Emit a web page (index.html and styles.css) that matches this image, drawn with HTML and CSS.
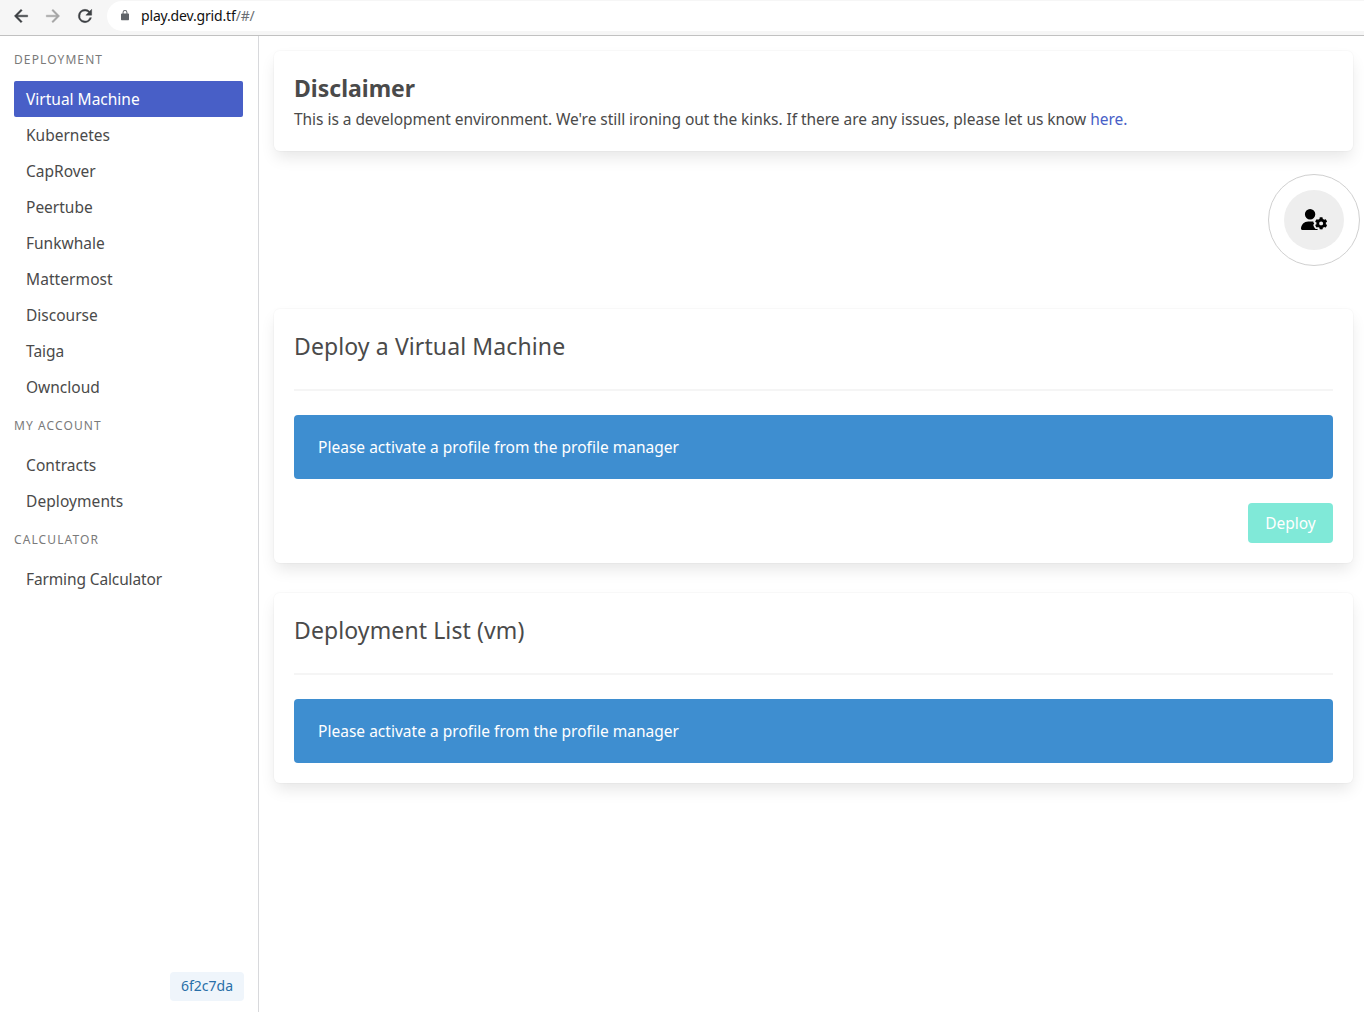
FILE: index.html
```html
<!DOCTYPE html>
<html lang="en">
<head>
<meta charset="utf-8">
<title>Playground</title>
<link rel="stylesheet" href="styles.css">
</head>
<body>
<header class="toolbar">
  <svg class="nav-icon" viewBox="0 0 24 24"><path d="M20 11H7.83l5.59-5.59L12 4l-8 8 8 8 1.41-1.41L7.83 13H20v-2z"/></svg>
  <svg class="nav-icon nav-icon-off" viewBox="0 0 24 24"><path d="M12 4l-1.41 1.41L16.17 11H4v2h12.17l-5.58 5.59L12 20l8-8z"/></svg>
  <svg class="nav-icon" viewBox="0 0 24 24"><path d="M17.65 6.35A7.96 7.96 0 0 0 12 4a8 8 0 1 0 7.73 10h-2.08A6 6 0 1 1 12 6c1.66 0 3.14.69 4.22 1.78L13 11h7V4l-2.35 2.35z"/></svg>
  <div class="address">
    <svg class="lock" viewBox="0 0 10 13"><path d="M1.2 4.500H2V3.200a3 3 0 0 1 6 0v1.300h.8c.7 0 1.200.5 1.200 1.200v6.100c0 .7-.5 1.200-1.200 1.200H1.200C.5 13 0 12.500 0 11.800V5.700c0-.7.5-1.200 1.200-1.200zM3.200 4.500h3.600V3.200a1.800 1.800 0 0 0-3.600 0z"/></svg>
    <span class="url">play.dev.grid.tf<span class="url-path">/#/</span></span>
  </div>
</header>
<div class="layout">
  <aside class="sidebar">
    <nav>
      <p class="menu-label">Deployment</p>
      <ul class="menu">
        <li class="item item-active">Virtual Machine</li>
        <li class="item">Kubernetes</li>
        <li class="item">CapRover</li>
        <li class="item">Peertube</li>
        <li class="item">Funkwhale</li>
        <li class="item item-wide">Mattermost</li>
        <li class="item">Discourse</li>
        <li class="item">Taiga</li>
        <li class="item">Owncloud</li>
      </ul>
      <p class="menu-label">My Account</p>
      <ul class="menu">
        <li class="item item-wide">Contracts</li>
        <li class="item item-wide">Deployments</li>
      </ul>
      <p class="menu-label">Calculator</p>
      <ul class="menu">
        <li class="item item-narrow">Farming Calculator</li>
      </ul>
    </nav>
    <span class="version">6f2c7da</span>
  </aside>
  <main class="content">
    <section class="box">
      <h1 class="heading">Disclaimer</h1>
      <p class="notice">This is a development environment. We're still ironing out the kinks. If there are any issues, please let us know <a class="link">here.</a></p>
    </section>
    <div class="profile-row">
      <div class="profile-ring">
        <button class="profile-button" aria-label="Profile manager">
          <svg class="profile-icon" viewBox="0 0 640 512"><path d="M224 0a128 128 0 1 1 0 256A128 128 0 1 1 224 0zM178.300 304h91.400c11.800 0 23.400 1.200 34.500 3.300c-2.100 18.500 7.400 35.600 21.800 44.800c-16.600 10.600-26.700 31.600-20 53.300c4 12.900 9.400 25.500 16.400 37.600s15.200 23.100 24.400 33c15.700 16.900 39.600 18.400 57.200 8.700v.9c0 9.200 2.700 18.500 7.900 26.300H29.700C13.300 512 0 498.700 0 482.300C0 383.800 79.800 304 178.300 304z"/><path d="M610.500 373.300c2.600-14.100 2.600-28.500 0-42.600l25.800-14.900c3-1.700 4.300-5.200 3.300-8.500-6.700-21.600-18.200-41.200-33.200-57.400-2.300-2.500-6-3.100-9-1.400l-25.800 14.900c-10.900-9.300-23.400-16.500-36.900-21.300v-29.800c0-3.400-2.400-6.400-5.700-7.100-22.300-5-45-4.800-66.200 0-3.300.7-5.700 3.700-5.700 7.100v29.800c-13.500 4.800-26 12-36.900 21.300l-25.800-14.900c-2.900-1.700-6.700-1.100-9 1.400-15 16.200-26.500 35.800-33.200 57.400-1 3.300.4 6.800 3.300 8.500l25.800 14.900c-2.600 14.100-2.600 28.500 0 42.600l-25.800 14.900c-3 1.700-4.300 5.200-3.300 8.500 6.700 21.600 18.200 41.100 33.200 57.400 2.300 2.500 6 3.100 9 1.400l25.800-14.900c10.900 9.300 23.400 16.500 36.900 21.300v29.800c0 3.400 2.400 6.400 5.700 7.100 22.300 5 45 4.800 66.200 0 3.300-.7 5.700-3.700 5.700-7.100v-29.800c13.500-4.800 26-12 36.900-21.300l25.800 14.900c2.900 1.700 6.700 1.100 9-1.400 15-16.200 26.500-35.800 33.200-57.400 1-3.300-.4-6.800-3.300-8.500l-25.800-14.900zM496 400.500c-26.800 0-48.500-21.800-48.500-48.500s21.800-48.500 48.500-48.500 48.500 21.800 48.500 48.500-21.700 48.500-48.500 48.500z"/></svg>
        </button>
      </div>
    </div>
    <section class="box">
      <h2 class="title">Deploy a Virtual Machine</h2>
      <hr class="rule">
      <div class="alert">Please activate a profile from the profile manager</div>
      <div class="actions"><button class="deploy">Deploy</button></div>
    </section>
    <section class="box box-list">
      <h2 class="title">Deployment List (vm)</h2>
      <hr class="rule">
      <div class="alert">Please activate a profile from the profile manager</div>
    </section>
  </main>
</div>
</body>
</html>
```
FILE: styles.css
```css
* { box-sizing: border-box; }

body {
  margin: 0;
  height: 1012px;
  display: flex;
  flex-direction: column;
  overflow: hidden;
  background: #fff;
  color: #4a4a4a;
  font: 15.5px/24px "Noto Sans", sans-serif;
}

.toolbar {
  flex: none;
  height: 36px;
  display: flex;
  align-items: center;
  gap: 12px;
  padding: 0 0 4px 11px;
  background: #f6f6f6;
  border-bottom: 1px solid #c1c1c1;
}
.nav-icon { width: 20px; height: 20px; fill: #3c4043; stroke: #3c4043; stroke-width: .5; }
.nav-icon-off { fill: #a5a5a5; stroke: #a5a5a5; }
.address {
  flex: 1;
  height: 30px;
  margin-top: 1px;
  display: flex;
  align-items: center;
  gap: 12px;
  padding-left: 14px;
  background: #fff;
  border-radius: 15px 0 0 15px;
}
.lock { width: 8px; height: 12px; margin-top: -2px; fill: #5f6368; }
.url { font-size: 14px; line-height: 20px; letter-spacing: -.16px; color: #111; }
.url-path { color: #6b6f74; }

.layout { flex: 1; min-height: 0; display: flex; }
.sidebar {
  width: 259px;
  display: flex;
  flex-direction: column;
  justify-content: space-between;
  padding: 15px 15px 11px 14px;
  border-right: 1px solid #d8d9dc;
}
.menu-label {
  margin: 0 0 12px;
  font-size: 12px;
  line-height: 18px;
  letter-spacing: 1.1px;
  text-transform: uppercase;
  color: #7a7a7a;
}
.menu { list-style: none; margin: 0 0 12px; padding: 0; }
.item { height: 36px; padding: 6px 12px; border-radius: 2px; }
.item-wide { letter-spacing: .08px; }
.item-narrow { letter-spacing: -.13px; }
.item-active { background: #485fc7; color: #fff; }
.version {
  align-self: flex-end;
  width: 74px;
  height: 29px;
  margin-right: -1px;
  border-radius: 4px;
  background: #eff5fb;
  color: #296fa8;
  font-size: 14px;
  line-height: 27px;
  text-align: center;
}

.content { flex: 1; padding: 15px 11px 0 15px; }
.box {
  padding: 20px;
  border-radius: 6px;
  background: #fff;
  box-shadow: 0 8px 16px -2px rgba(10, 10, 10, .1), 0 0 0 1px rgba(10, 10, 10, .02);
}
.box-list { margin-top: 30px; }
.heading { margin: 0 0 2px; font-size: 23px; line-height: 34px; font-weight: 700; }
.notice { margin: 0; letter-spacing: -.045px; }
.link { color: #485fc7; }

.profile-row {
  height: 158px;
  margin-right: -7px;
  padding-top: 23px;
  display: flex;
  justify-content: flex-end;
}
.profile-ring {
  width: 92px;
  height: 92px;
  padding: 15px;
  border: 1px solid #d0d0d0;
  border-radius: 50%;
}
.profile-button {
  width: 60px;
  height: 60px;
  display: flex;
  align-items: center;
  justify-content: center;
  padding: 0 0 1px;
  border: 0;
  border-radius: 50%;
  background: #eee;
}
.profile-icon { width: 26px; height: 21px; fill: #000; }

.title {
  margin: 0 0 26px;
  font-size: 23px;
  line-height: 34px;
  font-weight: 400;
  letter-spacing: .11px;
}
.rule { height: 2px; margin: 0 0 24px; border: 0; background: #f5f5f5; }
.alert {
  height: 64px;
  padding: 20px 24px;
  border-radius: 4px;
  background: #3e8ed0;
  color: #fff;
  letter-spacing: .02px;
}
.actions { display: flex; justify-content: flex-end; margin-top: 24px; }
.deploy {
  width: 85px;
  height: 40px;
  padding: 0;
  border: 0;
  border-radius: 4px;
  background: #80e9d8;
  color: #fff;
  font: inherit;
}
```
